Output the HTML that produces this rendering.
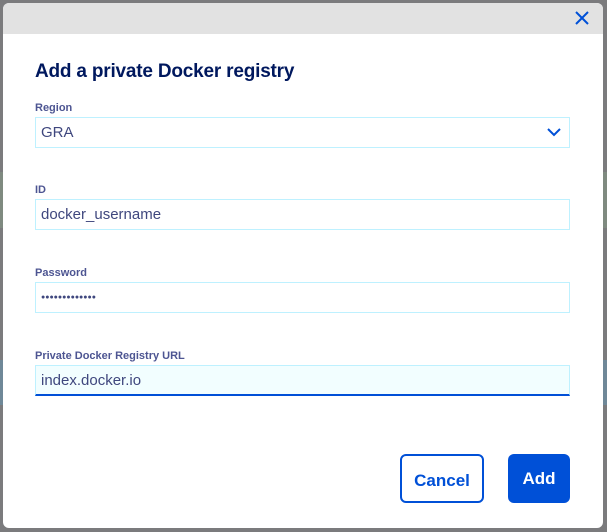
<!DOCTYPE html>
<html><head><style>
body{margin:0;width:607px;height:532px;background:#7b7b7d;font-family:"Liberation Sans",sans-serif;position:relative;overflow:hidden}
.dlg{position:absolute;left:3px;top:3px;width:600px;height:525px;background:#fff;border-radius:6px;overflow:hidden}
.hd{height:31px;background:#e2e2e2}
.x{position:absolute;right:13px;top:7px}
h1{position:absolute;left:32px;top:58px;margin:0;font-size:19px;font-weight:bold;color:#00185e;letter-spacing:-0.2px}
label{position:absolute;left:32px;font-size:11px;font-weight:bold;color:#4d5592}
.in{position:absolute;left:32px;width:533px;height:29px;border:1px solid #bef1ff;font-size:15px;color:#3f477e;line-height:29px;padding-left:5px;box-sizing:content-box}
.btn{position:absolute;top:451px;height:49px;border-radius:6px;font-size:17px;font-weight:bold;text-align:center;line-height:49px;box-sizing:border-box}
</style></head><body>
<div style="position:absolute;left:0;top:172px;width:607px;height:56px;background:#7f8a80"></div>
<div style="position:absolute;left:0;top:360px;width:607px;height:45px;background:#6f8898"></div>
<div class="dlg">
<div class="hd"></div>
<svg class="x" width="16" height="16" viewBox="0 0 16 16"><path d="M2 2L14 14M14 2L2 14" stroke="#0050d7" stroke-width="2"/></svg>
<h1>Add a private Docker registry</h1>
<label style="top:99px">Region</label>
<div class="in" style="top:114px;width:528px">GRA
<svg style="position:absolute;right:8px;top:10px" width="14" height="9" viewBox="0 0 14 9"><path d="M1 1L7 7L13 1" stroke="#0050d7" stroke-width="2" fill="none"/></svg></div>
<label style="top:181px">ID</label>
<div class="in" style="top:196px;width:528px">docker_username</div>
<label style="top:264px">Password</label>
<div class="in" style="top:279px;width:528px;font-size:7px;letter-spacing:0">●●●●●●●●●●●●●</div>
<label style="top:347px">Private Docker Registry URL</label>
<div class="in" style="top:362px;width:528px;background:#f2feff;border-bottom:2px solid #0050d7;height:28px">index.docker.io</div>
<div class="btn" style="left:397px;width:84px;border:2px solid #0050d7;color:#0050d7">Cancel</div>
<div class="btn" style="left:505px;width:62px;background:#0050d7;color:#fff">Add</div>
</div>
</body></html>
